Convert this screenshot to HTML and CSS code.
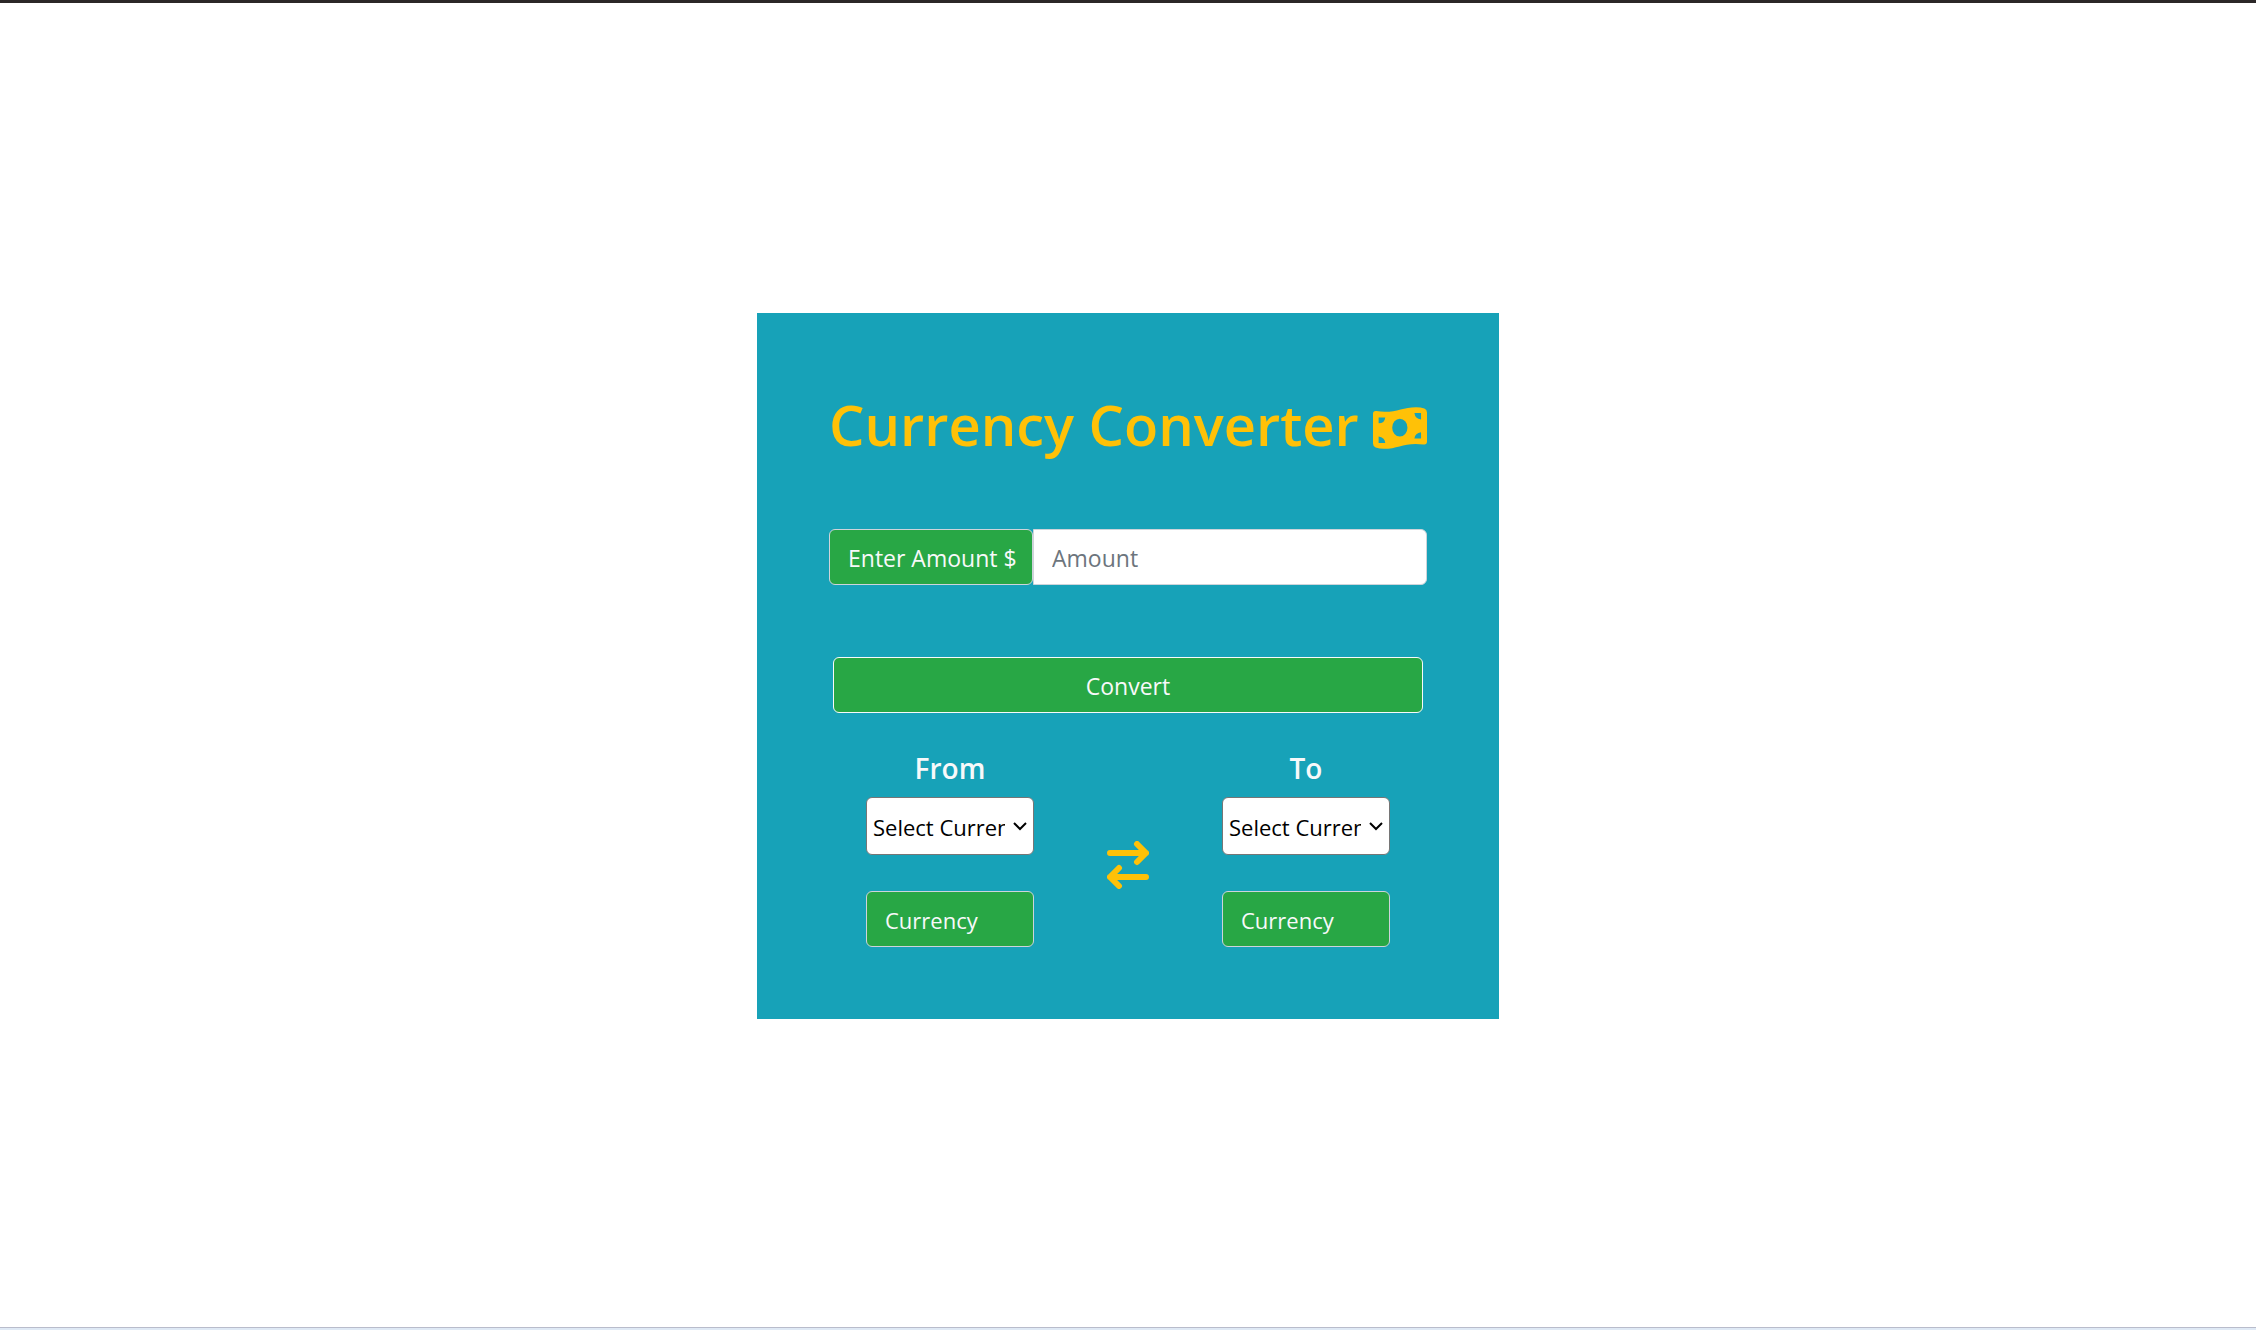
FILE: index.html
```html
<!DOCTYPE html>
<html lang="en">
<head>
  <meta charset="utf-8">
  <meta name="viewport" content="width=device-width, initial-scale=1">
  <title>Currency Converter</title>
  <link rel="stylesheet" href="styles.css">
</head>
<body>
  <main class="page">
    <form class="card">
      <h1 class="title">
        <span>Currency Converter</span>
        <svg class="title-icon" viewBox="0 0 163 126" aria-hidden="true"><path fill-rule="evenodd" d="M0 20Q0 11 10 12C66 20 86 0 130 0Q144 0 155 4Q163 7 163 16V104Q163 114 153 113C97 105 77 126 33 126Q19 126 8 122Q0 119 0 110ZM81 35a23 27 0 1 0 0 54a23 27 0 1 0 0-54ZM17 31H37Q35 49 17 49ZM17 89Q35 91 37 108H17ZM125 18H145V37Q127 35 125 18ZM145 76V95H125Q127 78 145 76Z"/></svg>
      </h1>
      <div class="amount">
        <label class="amount-label" for="amount">Enter Amount $</label>
        <input class="amount-input" id="amount" type="text" inputmode="decimal" placeholder="Amount">
      </div>
      <button class="convert" type="button">Convert</button>
      <div class="exchange">
        <div class="side">
          <label class="side-title" for="from">From</label>
          <div class="picker">
            <select class="picker-select" id="from"><option>Select Currency</option></select>
            <svg class="picker-arrow" viewBox="0 0 14 9" aria-hidden="true"><path d="M1 1l6 6 6-6"/></svg>
          </div>
          <input class="result" type="text" placeholder="Currency" aria-label="From amount">
        </div>
        <svg class="swap" viewBox="0 0 448 512" aria-hidden="true"><path d="M32 128H416M320 32l96 96-96 96M416 384H32M128 288l-96 96 96 96"/></svg>
        <div class="side">
          <label class="side-title" for="to">To</label>
          <div class="picker">
            <select class="picker-select" id="to"><option>Select Currency</option></select>
            <svg class="picker-arrow" viewBox="0 0 14 9" aria-hidden="true"><path d="M1 1l6 6 6-6"/></svg>
          </div>
          <input class="result" type="text" placeholder="Currency" aria-label="To amount">
        </div>
      </div>
    </form>
  </main>
</body>
</html>
```
FILE: styles.css
```css
* {
  box-sizing: border-box;
}

body {
  margin: 0;
  font-family: "Segoe UI", "Open Sans", "Noto Sans", sans-serif;
  font-size: 23px;
  line-height: 36px;
  background: #fff;
}

.page {
  display: flex;
  align-items: center;
  justify-content: center;
  min-height: 100vh;
  padding-top: 1px;
  border-top: 3px solid #2b2728;
  border-bottom: 2px solid #dfe9f5;
  box-shadow: inset 0 -1px #b9bccb;
}

.card {
  width: 100%;
  max-width: 742px;
  padding: 72px;
  background: #17a2b8;
}

.title {
  display: flex;
  align-items: center;
  justify-content: space-between;
  margin: 0 0 66px;
  color: #ffc107;
  font-size: 56px;
  font-weight: 600;
  line-height: 78px;
  white-space: nowrap;
}

.title-icon {
  flex: none;
  width: 54px;
  height: 42px;
  margin-top: 8px;
  fill: currentColor;
}

input,
select,
button {
  font: inherit;
  margin: 0;
}

.amount {
  display: flex;
  margin-bottom: 72px;
}

.amount-label,
.amount-input,
.convert,
.result {
  height: 56px;
  padding: 2px 18px 0;
  border: 1px solid #ced4da;
  border-radius: 6px;
}

.amount-label {
  flex: none;
  width: 204px;
  padding-top: 10px;
  background: #28a745;
  color: #f8f9fa;
  white-space: nowrap;
}

.amount-input {
  flex: 1;
  min-width: 0;
  border-radius: 0 6px 6px 0;
  background: #fff;
  color: #495057;
}

.amount-input::placeholder {
  color: #6c757d;
  opacity: 1;
}

.convert {
  display: block;
  width: calc(100% - 8px);
  margin: 0 auto 36px;
  border-color: #f8f9fa;
  background: #28a745;
  color: #f8f9fa;
}

.exchange {
  display: flex;
  align-items: center;
  justify-content: space-between;
  padding: 0 37px;
}

.side {
  display: flex;
  flex-direction: column;
  width: 168px;
  font-size: 22px;
}

.side-title {
  margin-bottom: 10px;
  color: #f8f9fa;
  font-size: 28px;
  font-weight: 600;
  line-height: 38px;
  text-align: center;
}

.picker {
  display: grid;
  align-items: center;
  margin-bottom: 36px;
}

.picker-select,
.picker-arrow {
  grid-area: 1 / 1;
}

.picker-select {
  width: 100%;
  height: 58px;
  padding: 2px 28px 0 6px;
  border: 1px solid #767676;
  border-radius: 6px;
  appearance: none;
  background: #fff;
  color: #000;
}

.picker-arrow {
  justify-self: end;
  width: 14px;
  height: 9px;
  margin-right: 7px;
  fill: none;
  stroke: #000;
  stroke-width: 2;
  pointer-events: none;
}

.result {
  width: 100%;
  background: #28a745;
  color: #f8f9fa;
}

.result::placeholder {
  color: #f8f9fa;
  opacity: 1;
}

.swap {
  width: 42px;
  height: 48px;
  margin-top: 34px;
  fill: none;
  stroke: #ffc107;
  stroke-width: 64;
  stroke-linecap: round;
  stroke-linejoin: round;
}
```
